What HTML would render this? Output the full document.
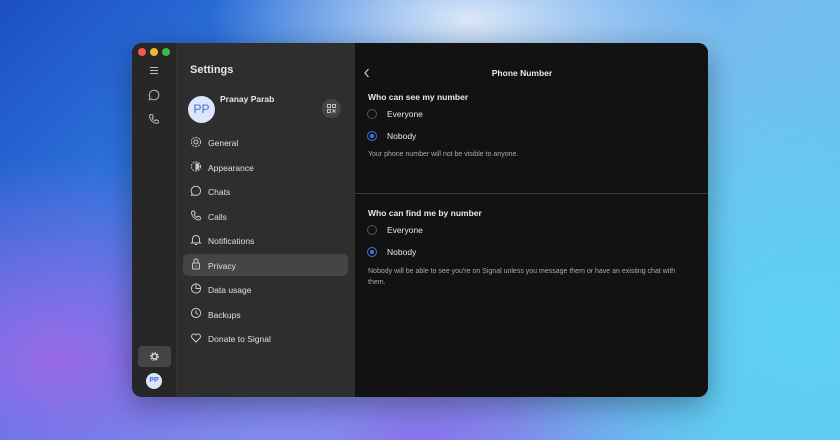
<!DOCTYPE html>
<html><head><style>
*{margin:0;padding:0;box-sizing:border-box}
body{width:840px;height:440px;overflow:hidden;font-family:"Liberation Sans",sans-serif;position:relative;
background:
radial-gradient(ellipse 260px 120px at 470px 20px,#dce8f7 0%,rgba(220,232,247,0) 100%),
radial-gradient(ellipse 300px 260px at 800px 330px,#5ed0f4 0%,rgba(94,208,244,0) 100%),
radial-gradient(ellipse 300px 200px at 60px 360px,#9a6ae8 0%,rgba(154,106,232,0) 100%),
radial-gradient(ellipse 300px 200px at 420px 440px,#8a72ec 0%,rgba(138,114,236,0) 100%),
linear-gradient(135deg,#1c4fc0 0%,#3686ea 35%,#77bdf0 60%,#5cc6f0 100%);}
.win{position:absolute;left:132px;top:43px;width:576px;height:354px;border-radius:10px;overflow:hidden;box-shadow:0 8px 30px rgba(0,0,0,.35);background:#121212}
.rail{position:absolute;left:0;top:0;width:45px;height:100%;background:#272727;border-right:1px solid #333}
.side{position:absolute;left:45px;top:0;width:178px;height:100%;background:#2e2e2e}
.main{position:absolute;left:223px;top:0;right:0;height:100%;background:#121212}
.dot{position:absolute;top:5px;width:8px;height:8px;border-radius:50%}
.t{position:absolute;color:#e8e8e8;white-space:nowrap}
svg{position:absolute}
.item{position:absolute;left:31px;font-size:8.5px;color:#e0e0e0}
.radio{position:absolute;left:12px;width:10px;height:10px;border-radius:50%;border:1px solid #555}
.radio.on{border:1.5px solid #3a76f0}
.radio.on::after{content:"";position:absolute;left:1.5px;top:1.5px;width:4px;height:4px;border-radius:50%;background:#3a76f0}
</style></head><body>
<div class="win">
 <div class="rail">
  <div class="dot" style="left:6px;background:#ec5a50"></div>
  <div class="dot" style="left:18px;background:#e9b830"></div>
  <div class="dot" style="left:30px;background:#3cb94a"></div>
  <svg style="left:17px;top:23px" width="10" height="9" viewBox="0 0 10 9"><path d="M1 1.5h8M1 4.5h8M1 7.5h8" stroke="#bbb" stroke-width="1"/></svg>
  <svg style="left:16px;top:46px" width="12" height="12" viewBox="0 0 12 12"><path d="M6 1.2a4.8 4.8 0 1 1-2.6 8.8L1.3 10.7l.7-2.2A4.8 4.8 0 0 1 6 1.2z" fill="none" stroke="#bbb" stroke-width="1"/></svg>
  <svg style="left:16px;top:70px" width="12" height="12" viewBox="0 0 12 12"><path d="M2.5 1.5l2 .2.8 2.2-1.2 1a6 6 0 0 0 3 3l1-1.2 2.2.8.2 2c-.3.5-1 .9-1.6.9A8 8 0 0 1 1.5 3c0-.6.4-1.2 1-1.5z" fill="none" stroke="#bbb" stroke-width="1"/></svg>
  <div style="position:absolute;left:6px;top:303px;width:33px;height:21px;border-radius:4px;background:#454545"></div>
  <svg style="left:17px;top:308px" width="11" height="11" viewBox="0 0 12 12"><circle cx="6" cy="6" r="3.6" fill="none" stroke="#ddd" stroke-width="2.2" stroke-dasharray="1.6 1.2"/><circle cx="6" cy="6" r="2.6" fill="none" stroke="#ddd" stroke-width="1.2"/></svg>
  <div style="position:absolute;left:14px;top:330px;width:16px;height:16px;border-radius:50%;background:#dbe6fb;color:#3a6fd8;font-size:7px;font-weight:bold;text-align:center;line-height:16px">PP</div>
 </div>
 <div class="side">
  <div class="t" style="left:13px;top:21px;font-size:11px;font-weight:bold">Settings</div>
  <div style="position:absolute;left:11px;top:53px;width:27px;height:27px;border-radius:50%;background:#dbe6fb;color:#3a6fd8;font-size:12px;text-align:center;line-height:27px">PP</div>
  <div class="t" style="left:43px;top:51px;font-size:8.5px;font-weight:bold">Pranay Parab</div>
  <div style="position:absolute;left:145px;top:56px;width:19px;height:19px;border-radius:50%;background:#454545"></div>
  <svg style="left:150px;top:61px" width="9" height="9" viewBox="0 0 9 9"><rect x=".5" y=".5" width="3" height="3" fill="none" stroke="#ccc" stroke-width=".9"/><rect x="5.5" y=".5" width="3" height="3" fill="none" stroke="#ccc" stroke-width=".9"/><rect x=".5" y="5.5" width="3" height="3" fill="none" stroke="#ccc" stroke-width=".9"/><path d="M5.5 5.5l3 3M8.5 5.5l-3 3" stroke="#ccc" stroke-width=".9"/></svg>
  <div style="position:absolute;left:6px;top:211px;width:165px;height:22px;border-radius:5px;background:#454545"></div>
  <svg style="left:13px;top:93px" width="12" height="250" viewBox="0 0 12 250" fill="none" stroke="#c8c8c8" stroke-width="1">
   <circle cx="6" cy="6" r="4.6" stroke-dasharray="2 1"/><circle cx="6" cy="6" r="2"/>
   <circle cx="6" cy="30.5" r="4.6" stroke-dasharray="2 1"/><path d="M6 27.5a3 3 0 0 1 0 6z" fill="#c8c8c8"/>
   <path d="M6 50.2a4.6 4.6 0 1 1-2.5 8.5L1.5 59.5l.6-2A4.6 4.6 0 0 1 6 50.2z"/>
   <path d="M2.5 75l2 .2.8 2.2-1.2 1a6 6 0 0 0 3 3l1-1.2 2.2.8.2 2c-.3.5-1 .9-1.6.9A8 8 0 0 1 1.5 76.5c0-.6.4-1.2 1-1.5z"/>
   <path d="M2.5 106v-3a3.5 3.5 0 0 1 7 0v3l1 1h-9zM4.8 108.5h2.4"/>
   <rect x="2.5" y="127" width="7" height="6" rx="1"/><path d="M4 127v-2a2 2 0 0 1 4 0v2M6 129.5v1.5"/>
   <circle cx="6" cy="152.5" r="4.6"/><path d="M6 148v4.5h4.5"/>
   <circle cx="6" cy="177" r="4.6"/><path d="M6 174.5v2.5l1.8 1.2"/>
   <path d="M6 206l-4-4a2.3 2.3 0 0 1 4-3 2.3 2.3 0 0 1 4 3z"/>
  </svg>
  <div class="item" style="top:95px">General</div>
  <div class="item" style="top:119.5px">Appearance</div>
  <div class="item" style="top:144px">Chats</div>
  <div class="item" style="top:168.5px">Calls</div>
  <div class="item" style="top:193px">Notifications</div>
  <div class="item" style="top:217.5px">Privacy</div>
  <div class="item" style="top:242px">Data usage</div>
  <div class="item" style="top:266.5px">Backups</div>
  <div class="item" style="top:291px">Donate to Signal</div>
 </div>
 <div class="main">
  <svg style="left:8px;top:25px" width="8" height="10" viewBox="0 0 8 10"><path d="M5.5 1L2 5l3.5 4" fill="none" stroke="#ccc" stroke-width="1.2"/></svg>
  <div class="t" style="left:0;width:334px;text-align:center;top:25px;font-size:8.5px;font-weight:bold">Phone Number</div>
  <div class="t" style="left:13px;top:49px;font-size:8.5px;font-weight:bold">Who can see my number</div>
  <div class="radio" style="top:66px"></div><div class="t" style="left:32px;top:66px;font-size:8.5px">Everyone</div>
  <div class="radio on" style="top:88px"></div><div class="t" style="left:32px;top:88px;font-size:8.5px">Nobody</div>
  <div class="t" style="left:13px;top:108px;font-size:7px;color:#aaa">Your phone number will not be visible to anyone.</div>
  <div style="position:absolute;left:0;right:0;top:150px;height:1px;background:#3a3a3a"></div>
  <div class="t" style="left:13px;top:165px;font-size:8.5px;font-weight:bold">Who can find me by number</div>
  <div class="radio" style="top:182px"></div><div class="t" style="left:32px;top:182px;font-size:8.5px">Everyone</div>
  <div class="radio on" style="top:204px"></div><div class="t" style="left:32px;top:204px;font-size:8.5px">Nobody</div>
  <div class="t" style="left:13px;top:223px;font-size:7px;color:#aaa;white-space:normal;width:312px;line-height:11px">Nobody will be able to see you're on Signal unless you message them or have an existing chat with them.</div>
 </div>
</div>
</body></html>
